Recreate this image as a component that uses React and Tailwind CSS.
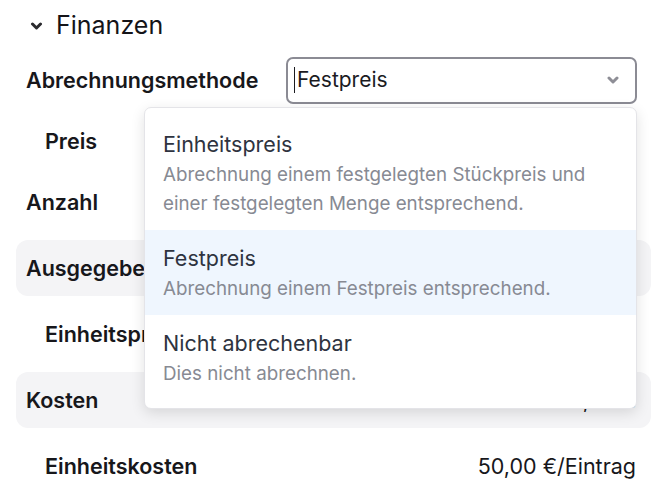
import React from 'react';

const options = [
  {
    title: 'Einheitspreis',
    desc: 'Abrechnung einem festgelegten Stückpreis und einer festgelegten Menge entsprechend.',
  },
  { title: 'Festpreis', desc: 'Abrechnung einem Festpreis entsprechend.', active: true },
  { title: 'Nicht abrechenbar', desc: 'Dies nicht abrechnen.' },
];

const Chevron = ({ className }) => (
  <svg viewBox="0 0 12 8" className={className} fill="none" stroke="currentColor" strokeWidth="3" strokeLinecap="round" strokeLinejoin="round">
    <path d="M2 2l4 4 4-4" />
  </svg>
);

const Row = ({ label, value, indent, shaded, h = 'h-[56px]' }) => (
  <div
    className={`flex items-center justify-between ${h} rounded-xl ${shaded ? 'bg-[#f4f4f6]' : ''} ${
      indent ? 'pl-[29px]' : 'pl-[10px]'
    } pr-[15px]`}
  >
    <span className="text-[21.5px] font-semibold text-[#17171b]">{label}</span>
    <span className="text-[21.5px] text-[#17171b]">{value}</span>
  </div>
);

const App = () => {
  return (
    <div className="w-[656px] h-[498px] bg-white overflow-hidden pl-[16px] pr-[5px] pt-[5px] font-['Inter',sans-serif]">
      {/* Section header */}
      <div className="flex items-center gap-[13px] pl-[14px] h-[42px]">
        <Chevron className="w-[13px] h-[8px] text-[#2a2a2e]" />
        <h2 className="text-[25px] text-[#141418]">Finanzen</h2>
      </div>

      <div className="flex flex-col gap-[10px] mt-[5px]">
        <div className="flex items-center justify-between h-[56px] pl-[10px] pr-[14px]">
          <span className="text-[21.5px] font-semibold text-[#17171b]">Abrechnungsmethode</span>
          <div className="relative">
            <div className="w-[351px] h-[47px] border-2 border-[#8b8b94] rounded-[7px] flex items-center justify-between pl-[6px] pr-[16px]">
              <span className="flex items-center text-[21px] text-[#1b1b1f]">
                <span className="w-px h-[26px] bg-[#1b1b1f] mr-[2px]" />
                Festpreis
              </span>
              <Chevron className="w-[12px] h-[8px] text-[#8e8e96]" />
            </div>

            {/* Dropdown */}
            <div className="absolute right-0 top-[50px] w-[493px] py-[8px] bg-white rounded-[7px] border border-[#e4e4e8] shadow-[0_4px_14px_rgba(0,0,0,0.12)] z-10 overflow-hidden">
              {options.map((o) => (
                <div key={o.title} className={`px-[18px] pt-[13px] pb-[12px] ${o.active ? 'bg-[#eff6fe]' : ''}`}>
                  <div className="text-[21.5px] leading-[31px] text-[#2e3340]">{o.title}</div>
                  <div className="text-[18.8px] leading-[29px] text-[#878a93]">{o.desc}</div>
                </div>
              ))}
            </div>
          </div>
        </div>

        <Row label="Preis" value="100,00 €" indent h="h-[46px]" />
        <Row label="Anzahl" value="1" />
        <Row label="Ausgegeben" value="150,00 €" shaded />
        <Row label="Einheitspreis" value="100,00 €" indent />
        <Row label="Kosten" value="150,00 €" shaded />
        <Row label="Einheitskosten" value="50,00 €/Eintrag" indent />
      </div>
    </div>
  );
};

export default App;
